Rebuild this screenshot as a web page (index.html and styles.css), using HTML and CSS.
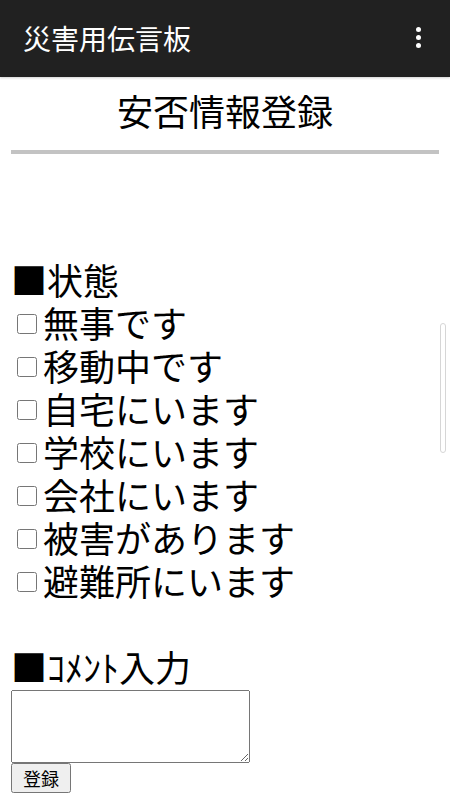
FILE: index.html
```html
<!DOCTYPE html>
<html lang="ja">
<head>
<meta charset="utf-8">
<title>災害用伝言板</title>
<link rel="stylesheet" href="styles.css">
</head>
<body>
<header class="appbar">
  <div class="appbar-title">災害用伝言板</div>
  <div class="menu-dots"><span></span><span></span><span></span></div>
</header>
<main class="content">
  <h1 class="page-title">安否情報登録</h1>
  <div class="divider"></div>
  <form class="form">
    <div class="section-label">■状態</div>
    <label class="item"><input type="checkbox" class="check">無事です</label>
    <label class="item"><input type="checkbox" class="check">移動中です</label>
    <label class="item"><input type="checkbox" class="check">自宅にいます</label>
    <label class="item"><input type="checkbox" class="check">学校にいます</label>
    <label class="item"><input type="checkbox" class="check">会社にいます</label>
    <label class="item"><input type="checkbox" class="check">被害があります</label>
    <label class="item"><input type="checkbox" class="check">避難所にいます</label>
    <div class="section-label comment-label">■ｺﾒﾝﾄ入力</div>
    <textarea class="comment"></textarea>
    <div class="actions"><button type="button" class="submit">登録</button></div>
  </form>
</main>
<div class="scroll-thumb"></div>
</body>
</html>
```

FILE: styles.css
```css
html, body {
  margin: 0;
  padding: 0;
  background: #ffffff;
}
body {
  width: 450px;
  height: 800px;
  overflow: hidden;
  position: relative;
  font-family: "Noto Sans CJK JP", "Noto Sans", sans-serif;
  color: #000;
}
.appbar {
  height: 77px;
  background: #212121;
  display: flex;
  align-items: center;
  justify-content: space-between;
  padding: 0 29px 0 23px;
  box-sizing: border-box;
  box-shadow: 0 1px 2px rgba(0,0,0,0.18);
}
.appbar-title {
  color: #ffffff;
  font-size: 28px;
  line-height: 1;
  margin-top: -2px;
}
.menu-dots {
  display: flex;
  flex-direction: column;
  gap: 3px;
  margin-top: -2px;
}
.menu-dots span {
  width: 5px;
  height: 5px;
  border-radius: 50%;
  background: #ffffff;
  display: block;
}
.content {
  padding: 0 11px;
}
.page-title {
  margin: 12px 0 0;
  font-size: 36px;
  font-weight: normal;
  line-height: 43px;
  text-align: center;
}
.divider {
  height: 4px;
  background: #c3c3c3;
  margin-top: 18px;
}
.form {
  display: flex;
  flex-direction: column;
  margin-top: 104px;
  font-size: 36px;
  line-height: 43px;
}
.section-label {
  height: 43px;
}
.item {
  display: flex;
  align-items: center;
  height: 43px;
}
.check {
  width: 20px;
  height: 20px;
  margin: 2px 6px 0 6px;
  flex: none;
}
.comment-label {
  margin-top: 43px;
}
.comment {
  width: 239px;
  height: 73px;
  box-sizing: border-box;
  margin: 2px 0 0;
  resize: vertical;
}
.actions {
  display: flex;
  line-height: 1;
}
.submit {
  font-family: "Noto Sans CJK JP", sans-serif;
  font-size: 18px;
  width: 60px;
  height: 30px;
  padding: 0;
  margin: 0;
  line-height: 1;
}
.scroll-thumb {
  position: absolute;
  left: 440px;
  top: 323px;
  width: 4px;
  height: 128px;
  border: 1px solid #d6d6d6;
  border-radius: 3px;
  background: #fff;
}
```
